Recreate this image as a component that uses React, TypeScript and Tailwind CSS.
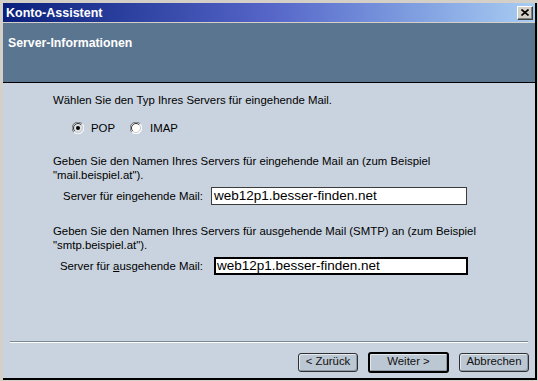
import React from "react";

function Radio({ checked }: { checked?: boolean }) {
  return (
    <svg width="12" height="12" viewBox="0 0 12 12" className="shrink-0">
      <circle cx="6" cy="6" r="5.5" fill={checked ? "#dde1e6" : "#ffffff"} />
      {/* outer ring */}
      <path d="M10.2 1.8 A5.5 5.5 0 0 0 1.8 10.2" stroke="#707070" fill="none" />
      <path d="M1.8 10.2 A5.5 5.5 0 0 0 10.2 1.8" stroke="#ffffff" fill="none" />
      {/* inner ring */}
      <path d="M9.2 2.8 A4.5 4.5 0 0 0 2.8 9.2" stroke="#303030" fill="none" />
      <path d="M2.8 9.2 A4.5 4.5 0 0 0 9.2 2.8" stroke="#c8c8c8" fill="none" />
      {checked && <circle cx="6" cy="6" r="2" fill="#000000" />}
    </svg>
  );
}

function Button({ label, primary, width }: { label: string; primary?: boolean; width: string }) {
  return (
    <div
      className={`${width} flex items-center justify-center rounded-[3px] bg-[#bcc7d4] text-[#111] shadow-[inset_1px_1px_0_#e4e9ef,inset_-1px_-1px_0_#8e99a6] ${
        primary ? "h-[21px] border-2 border-black" : "h-[19px] border border-[#303030]"
      }`}
    >
      {label}
    </div>
  );
}

export default function App() {
  return (
    <div className="w-[538px] h-[381px] bg-[#d4d0c8] flex flex-col pt-[3px] pl-[3px] pr-[1px] pb-[1px] font-['Liberation_Sans',Arial,sans-serif] text-[11.4px] text-black">
      <div className="flex-1 flex flex-col border-r-2 border-b-2 border-black">
        {/* title bar */}
        <div className="h-[19px] flex items-center justify-between pl-[3px] pr-[2px] bg-linear-to-r from-[#0a1f7c] via-[#5565c8] to-[#a8cdf2]">
          <span className="font-bold text-white text-[12.5px] leading-[14px]">Konto-Assistent</span>
          <div className="w-[16px] h-[14px] bg-[#d4d0c8] flex items-center justify-center border-t border-l border-white border-r border-b border-r-[#404040] border-b-[#404040] shadow-[inset_-1px_-1px_0_#808080]">
            <svg width="8" height="7" viewBox="0 0 8 7">
              <path d="M0.5 0.5 L7.5 6.5 M7.5 0.5 L0.5 6.5" stroke="#000" strokeWidth="1.6" />
            </svg>
          </div>
        </div>

        {/* header panel */}
        <div className="mt-[1px] h-[60px] bg-[#5a7590] border-b border-black pl-[5px] pt-[12px]">
          <span className="font-bold text-white text-[12.3px] leading-[14px]">Server-Informationen</span>
        </div>

        <div className="flex-1 flex flex-col bg-[#c8d3df]">
          <div className="flex-1 pl-[50px] pt-[10px] leading-[14px]">
            <p>Wählen Sie den Typ Ihres Servers für eingehende Mail.</p>

            <div className="mt-[15px] ml-[19px] h-[12px] flex items-center">
              <div className="w-[58px] flex items-center gap-[7px]">
                <Radio checked />
                <span>POP</span>
              </div>
              <div className="flex items-center gap-[8px]">
                <Radio />
                <span>IMAP</span>
              </div>
            </div>

            <p className="mt-[20px]">
              Geben Sie den Namen Ihres Servers für eingehende Mail an (zum Beispiel
              <br />
              "mail.beispiel.at").
            </p>
            <div className="mt-[5px] h-[18px] flex items-center">
              <span className="w-[150px] text-right">Server für eingehende Mail:</span>
              <div className="ml-[8px] w-[256px] h-[18px] bg-white border border-[#3c3c3c] pl-[2px] text-[13.5px] leading-[16px] flex items-center">
                web12p1.besser-finden.net
              </div>
            </div>

            <p className="mt-[19px]">
              Geben Sie den Namen Ihres Servers für ausgehende Mail (SMTP) an (zum Beispiel
              <br />
              "smtp.beispiel.at").
            </p>
            <div className="mt-[5px] h-[18px] flex items-center">
              <span className="w-[150px] text-right">
                Server für <span className="underline">a</span>usgehende Mail:
              </span>
              <div className="ml-[11px] w-[254px] h-[18px] bg-white border-2 border-black pl-[1px] text-[13.5px] leading-[16px] flex items-center">
                web12p1.besser-finden.net
              </div>
            </div>
          </div>

          <div className="mx-[7px] border-t border-[#7b8795] border-b border-b-white" />

          <div className="flex items-center justify-end gap-[10px] pt-[8px] pb-[5px] pr-[6px] h-[35px]">
            <Button label="< Zurück" width="w-[60px]" />
            <Button label="Weiter >" width="w-[81px]" primary />
            <Button label="Abbrechen" width="w-[70px]" />
          </div>
        </div>
      </div>
    </div>
  );
}
